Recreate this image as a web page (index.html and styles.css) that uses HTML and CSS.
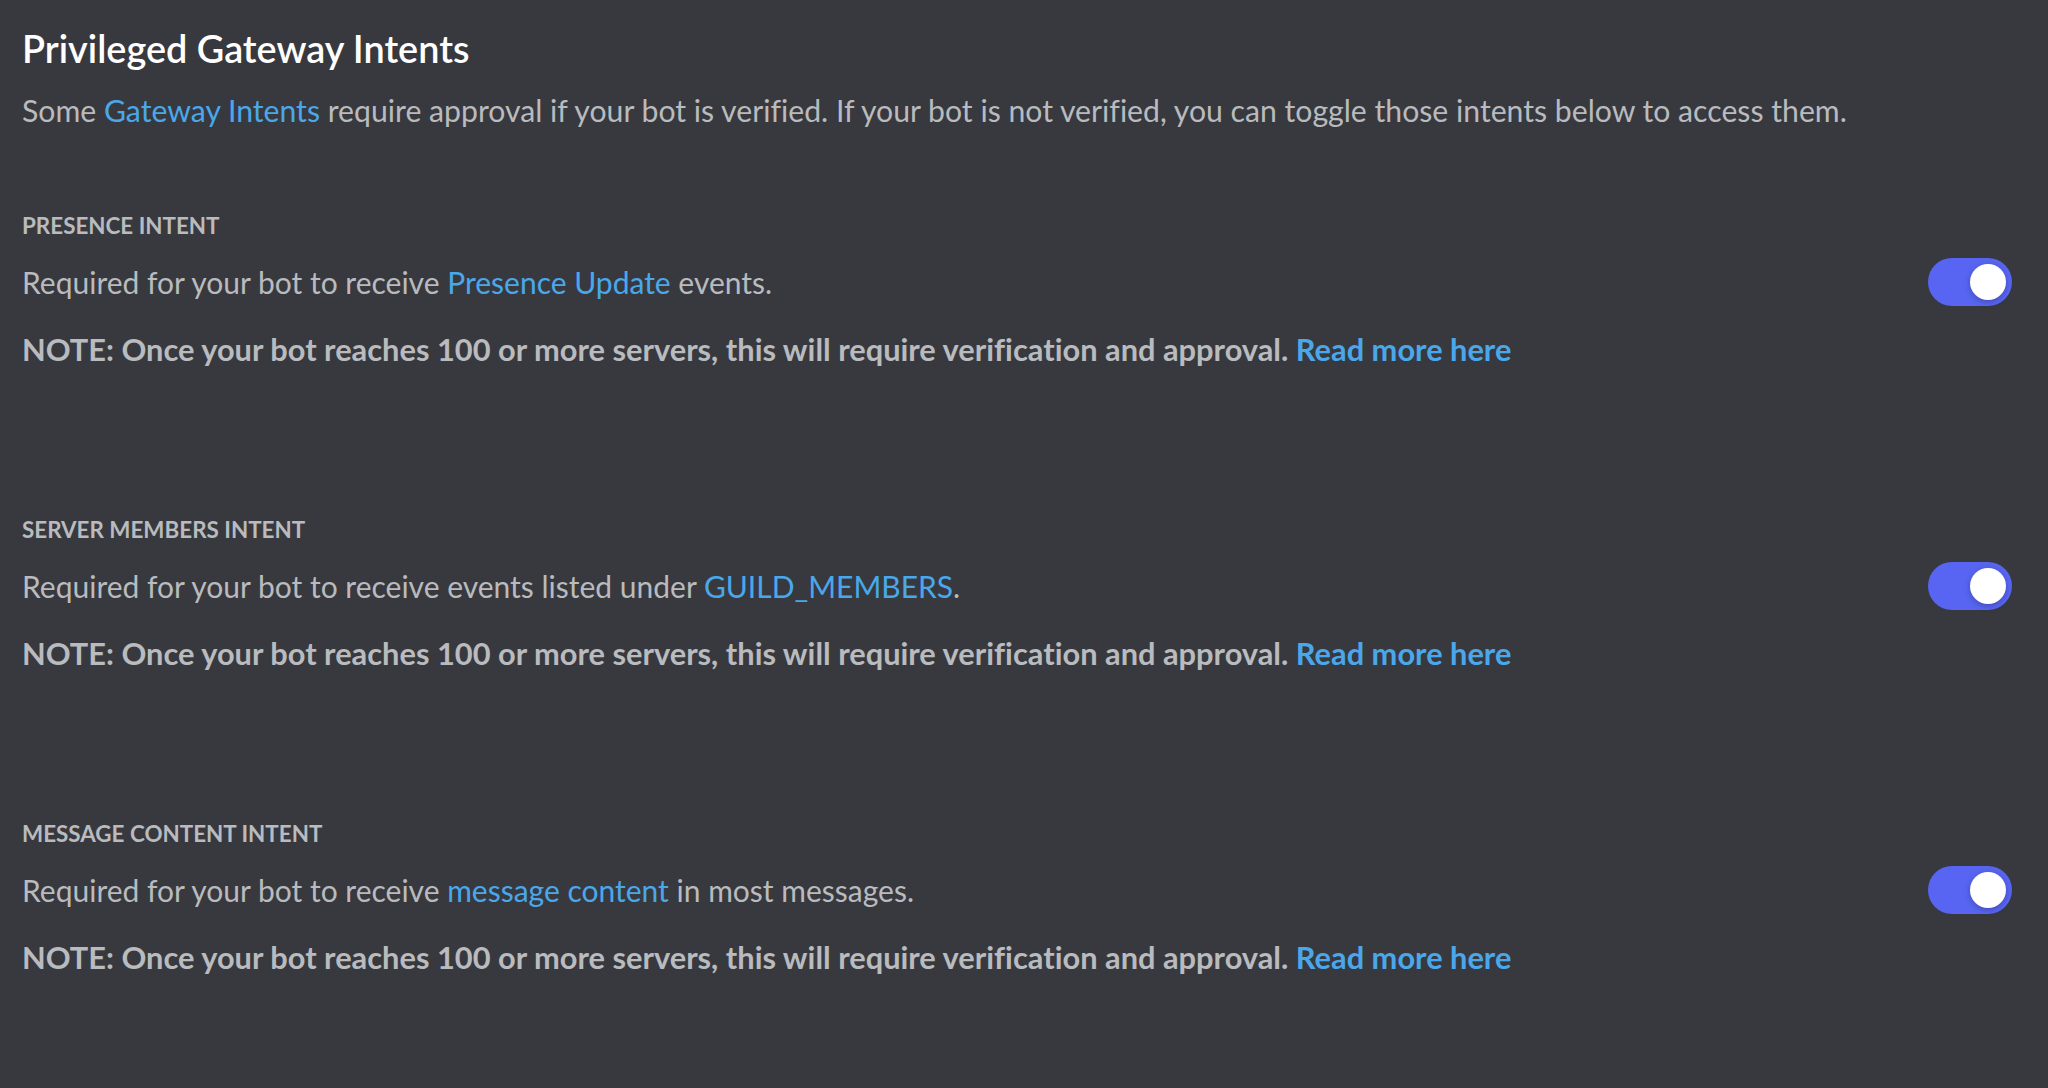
FILE: index.html
```html
<!DOCTYPE html>
<html lang="en">
<head>
<meta charset="utf-8">
<title>Privileged Gateway Intents</title>
<link rel="stylesheet" href="styles.css">
</head>
<body>
<main class="page">
  <header class="intro">
    <h1 class="title">Privileged Gateway Intents</h1>
    <p class="desc">Some <a class="link" href="#">Gateway Intents</a> require approval if your bot is verified. If your bot is not verified, you can toggle those intents below to access them.</p>
  </header>

  <section class="intent">
    <h2 class="label">PRESENCE INTENT</h2>
    <div class="row">
      <p class="text">Required for your bot to receive <a class="link" href="#">Presence Update</a> events.</p>
      <span class="toggle"><span class="knob"></span></span>
    </div>
    <p class="note">NOTE: Once your bot reaches 100 or more servers, this will require verification and approval. <a class="link" href="#">Read more here</a></p>
  </section>

  <section class="intent">
    <h2 class="label">SERVER MEMBERS INTENT</h2>
    <div class="row">
      <p class="text">Required for your bot to receive events listed under <a class="link" href="#">GUILD_MEMBERS</a>.</p>
      <span class="toggle"><span class="knob"></span></span>
    </div>
    <p class="note">NOTE: Once your bot reaches 100 or more servers, this will require verification and approval. <a class="link" href="#">Read more here</a></p>
  </section>

  <section class="intent">
    <h2 class="label">MESSAGE CONTENT INTENT</h2>
    <div class="row">
      <p class="text">Required for your bot to receive <a class="link" href="#">message content</a> in most messages.</p>
      <span class="toggle"><span class="knob"></span></span>
    </div>
    <p class="note">NOTE: Once your bot reaches 100 or more servers, this will require verification and approval. <a class="link" href="#">Read more here</a></p>
  </section>
</main>
</body>
</html>
```

FILE: styles.css
```css
html, body {
  margin: 0;
  padding: 0;
  background: #38393f;
  height: 100%;
}

body {
  font-family: Lato, "Liberation Sans", sans-serif;
  font-variant-ligatures: none;
  color: #b9bbbe;
}

.page {
  padding: 25px 36px 0 22px;
}

.title {
  margin: 0;
  font-size: 37.8px;
  line-height: 48px;
  font-weight: 600;
  color: #ffffff;
}

.desc {
  margin: 17px 0 0;
  font-size: 30.2px;
  line-height: 40px;
  font-weight: 400;
}

.link {
  color: #4aa8ea;
  text-decoration: none;
}

.intent {
  margin-top: 80px;
}

.intent + .intent {
  margin-top: 144px;
}

.label {
  margin: 0;
  font-size: 22.4px;
  line-height: 32px;
  font-weight: 700;
  color: #b9bbbe;
}

.row {
  margin-top: 16px;
  height: 48px;
  display: flex;
  align-items: center;
  justify-content: space-between;
}

.text {
  margin: 0;
  font-size: 30px;
  line-height: 40px;
}

.note {
  margin: 24px 0 0;
  font-size: 30.8px;
  line-height: 40px;
  font-weight: 700;
}

.toggle {
  width: 84px;
  height: 48px;
  border-radius: 24px;
  background: #5865f2;
  display: flex;
  align-items: center;
  justify-content: flex-end;
  padding: 0 6px;
  box-sizing: border-box;
  flex-shrink: 0;
}

.knob {
  width: 36px;
  height: 36px;
  border-radius: 50%;
  background: #ffffff;
  box-shadow: 0 2px 6px rgba(0, 0, 0, 0.25);
}
```
